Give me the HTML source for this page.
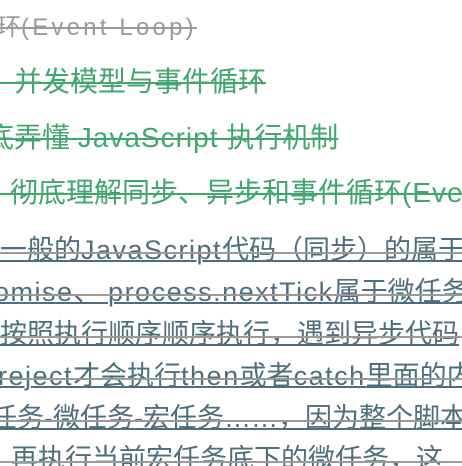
<!DOCTYPE html>
<html><head><meta charset="utf-8"><style>
html,body{margin:0;padding:0;width:462px;height:466px;overflow:hidden;background:#fff;position:relative}
.l{position:absolute;white-space:nowrap;font-family:"Liberation Sans","Noto Sans CJK SC",sans-serif;line-height:1}
.t{font-size:24px;color:#9a9a9a;text-decoration:line-through;text-decoration-thickness:2px}
.g{font-size:28px;color:#42a66e;text-decoration:line-through;text-decoration-thickness:2px}
.b{font-size:27px;color:#4d6e7d;text-decoration:underline;text-decoration-thickness:2px;text-underline-offset:1px}
.e{letter-spacing:1.5px}
.g .e{letter-spacing:1px}
.t .e{letter-spacing:3.2px}
.s{position:absolute;left:0;width:462px;height:2px;background:#9a9a9a}
</style></head><body>
<div class="l t" style="left:-3px;top:16px">环<span class="e">(Event Loop)</span></div>
<div class="l g" style="left:-14px;top:68px">　并发模型与事件循环</div>
<div class="l g" style="left:-14px;top:124px">底弄懂 <span class="e">JavaScript</span> 执行机制</div>
<div class="l g" style="left:-18px;top:179px">　彻底理解同步、异步和事件循环<span class="e">(Event Loop)</span></div>
<div class="l b" style="left:0;top:237px">一般的<span class="e">JavaScript</span>代码（同步）的属于宏任务</div>
<div class="l b" style="left:-6px;top:279px"><span class="e">omise</span>、 <span class="e">process.nextTick</span>属于微任务</div>
<div class="l b" style="left:0;top:321px">按照执行顺序顺序执行，遇到异步代码</div>
<div class="l b" style="left:-2px;top:363px"><span class="e">reject</span>才会执行<span class="e">then</span>或者<span class="e">catch</span>里面的内容</div>
<div class="l b" style="left:-10px;top:405px">任务-微任务-宏任务……，因为整个脚本</div>
<div class="l b" style="left:-16px;top:446px">、再执行当前宏任务底下的微任务，这</div>
<div class="s" style="top:252px"></div>
<div class="s" style="top:294px"></div>
<div class="s" style="top:336px"></div>
<div class="s" style="top:378px"></div>
<div class="s" style="top:420px"></div>
<div class="s" style="top:461px"></div>
</body></html>
